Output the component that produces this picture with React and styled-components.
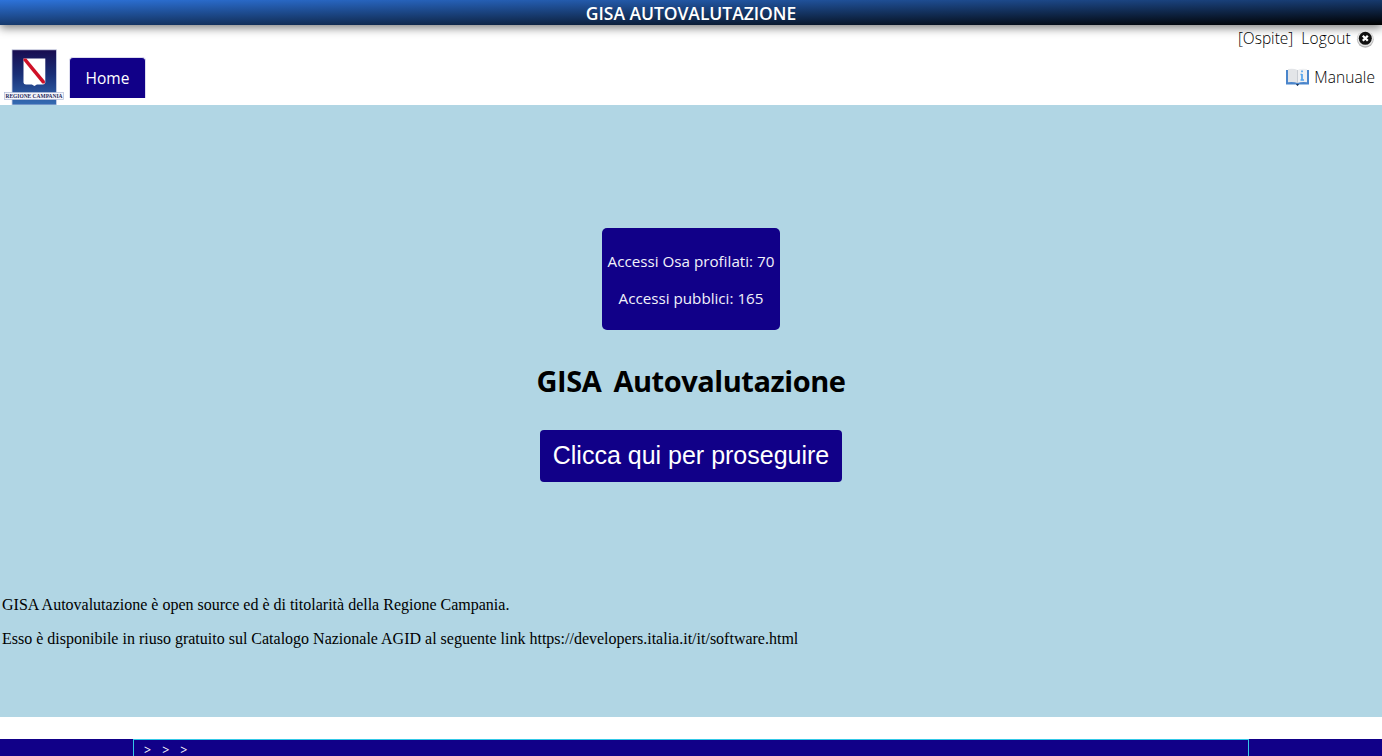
import React from 'react';
import styled, { createGlobalStyle } from 'styled-components';

const navy = '#110088';
const ui = "'Open Sans', 'Noto Sans', sans-serif";

const Global = createGlobalStyle`
  * { box-sizing: border-box; }
  html, body { margin: 0; background: #fff; overflow: hidden; }
`;
const Page = styled.div`
  height: 756px;
  display: flex;
  flex-direction: column;
  font-family: ${ui};
  color: #000;
`;
const TitleBar = styled.div`
  flex: none;
  height: 25px;
  background: linear-gradient(to bottom right, #2d73da, #000);
  box-shadow: 0 3px 10px rgba(0, 0, 0, 0.5);
  color: #fff;
  text-align: center;
  font-size: 17.5px;
  font-weight: 600;
  line-height: 27px;
  letter-spacing: -0.04px;
`;
const Header = styled.header`
  flex: none;
  height: 80px;
  display: flex;
  align-items: flex-start;
  padding: 0 7px 0 4px;
`;
const Logo = styled.svg`
  display: block;
  overflow: visible;
  margin-top: 24px;
  margin-right: 5px;
`;
const HomeTab = styled.a`
  width: 77px;
  height: 41px;
  margin-top: 32px;
  border: 1px solid #dcdcee;
  border-width: 1px 1px 0;
  border-radius: 4px 4px 0 0;
  background: ${navy};
  color: #fff;
  text-align: center;
  font-size: 15.5px;
  line-height: 41px;
`;
const UserArea = styled.div`
  margin-left: auto;
  display: flex;
  flex-direction: column;
  align-items: flex-end;
  font-size: 15.5px;
`;
const UserLine = styled.div`
  display: flex;
  align-items: center;
  height: ${(p) => p.$h}px;
  gap: ${(p) => p.$gap}px;
  font-weight: 300;
  color: #000;
`;
const Label = styled.span`
  padding-bottom: 1px;
  white-space: pre;
  letter-spacing: ${(p) => p.$track || 0}px;
`;
const Main = styled.main`
  flex: none;
  height: 612px;
  padding-top: 123px;
  background: #b1d6e4;
  display: flex;
  flex-direction: column;
  align-items: center;
`;
const Counter = styled.div`
  width: 178px;
  height: 102px;
  border-radius: 5px;
  background: ${navy};
  color: #f2f2fa;
  padding-top: 15px;
  text-align: center;
  font-size: 15.2px;
`;
const CounterLine = styled.div`
  height: 37px;
  line-height: 37px;
  white-space: nowrap;
`;
const Heading = styled.h1`
  margin: 31px 0 30px;
  height: 39px;
  line-height: 39px;
  font-size: 29px;
  font-weight: 700;
  letter-spacing: -0.45px;
  word-spacing: 5px;
  white-space: nowrap;
`;
const Proceed = styled.button`
  width: 302px;
  height: 52px;
  padding: 0 0 2px;
  border: 0;
  border-radius: 4px;
  background: ${navy};
  color: #fff;
  font: 25px 'Liberation Sans', sans-serif;
  white-space: nowrap;
`;
const Notes = styled.div`
  align-self: stretch;
  margin-top: 106px;
  padding-left: 2px;
  font-family: 'Liberation Serif', serif;
  font-size: 16px;
`;
const Note = styled.p`
  margin: 0;
  height: 34px;
  line-height: 34px;
`;
const Footer = styled.footer`
  margin-top: 22px;
  height: 17px;
  background: ${navy};
  display: flex;
  justify-content: center;
  overflow: hidden;
`;
const FooterBox = styled.div`
  width: 1116px;
  height: 30px;
  border: 1px solid #34c8e8;
  padding-left: 10px;
  display: flex;
  gap: 11px;
  color: #fff;
  font: 700 12.5px/20px 'Liberation Serif', serif;
`;

const RegionLogo = () => (
  <Logo width="60" height="56" viewBox="0 0 60 56">
    <defs>
      <linearGradient id="sky" x1="0" y1="0" x2="0" y2="1">
        <stop offset="0" stopColor="#180c50" />
        <stop offset="0.45" stopColor="#192f77" />
        <stop offset="1" stopColor="#356db4" />
      </linearGradient>
    </defs>
    <rect x="8" y="0.8" width="44.5" height="55.2" fill="url(#sky)" stroke="#cdd3e6" strokeWidth="0.8" />
    <path d="M19.5 9.500h21.800v24q0 2-2.500 2h-5.900l-2.500 1.500-2.500-1.500h-5.900q-2.500 0-2.500-2z" fill="#fff" />
    <path d="M19.500 9.500h2.800l18.600 22.500v2.500h-2.600l-18.800-23z" fill="#cf1027" />
    <rect x="0.500" y="43.500" width="59" height="7" fill="#f5f6fb" stroke="#aeb9d6" strokeWidth="0.7" />
    <text x="1.500" y="49.300" textLength="57" lengthAdjust="spacingAndGlyphs" fontFamily="Liberation Serif, serif" fontSize="6.500" fontWeight="700" fill="#24285c">REGIONE CAMPANIA</text>
  </Logo>
);
const CloseIcon = () => (
  <svg width="19" height="19" viewBox="0 0 19 19">
    <circle cx="9.300" cy="10.300" r="8.400" fill="#b8b8b8" />
    <circle cx="9.300" cy="9.300" r="7.900" fill="#e4e4e4" />
    <circle cx="9.300" cy="9.300" r="6.500" fill="#111" />
    <path d="M6.800 6.800l5 5M11.800 6.800l-5 5" stroke="#fff" strokeWidth="2.300" />
  </svg>
);
const BookIcon = () => (
  <svg width="23" height="18" viewBox="0 0 23 18">
    <path d="M0 2h23v14.500h-10l-1.500 1.500-1.500-1.500h-10z" fill="#4a85cb" />
    <path d="M2 1q6-1 9.500 1v13q-4-1.500-9.500-.8z" fill="#e3e5e8" />
    <path d="M21 1q-6-1-9.500 1v13q4-1.500 9.500-.8z" fill="#eff0f2" />
    <path d="M11.500 2v13" stroke="#c9cdd3" />
    <path d="M10 16h3l-1.500 2z" fill="#26384f" />
    <path d="M16 2.500v1.800M16 6v6.500M14.500 6.500h1.500M14.500 12h3.500" stroke="#54a4ee" strokeWidth="1.700" />
  </svg>
);

export default function App() {
  return (
    <Page>
      <Global />
      <TitleBar>GISA AUTOVALUTAZIONE</TitleBar>
      <Header>
        <RegionLogo />
        <HomeTab>Home</HomeTab>
        <UserArea>
          <UserLine $h={26} $gap={8}>
            <Label>[Ospite]</Label>
            <UserLine $h={26} $gap={5}><Label $track={0.2}>Logout</Label><CloseIcon /></UserLine>
          </UserLine>
          <UserLine $h={52} $gap={5}><BookIcon /><Label $track={0.1}>Manuale</Label></UserLine>
        </UserArea>
      </Header>
      <Main>
        <Counter>
          <CounterLine>Accessi Osa profilati: 70</CounterLine>
          <CounterLine>Accessi pubblici: 165</CounterLine>
        </Counter>
        <Heading>GISA Autovalutazione</Heading>
        <Proceed>Clicca qui per proseguire</Proceed>
        <Notes>
          <Note>GISA Autovalutazione è open source ed è di titolarità della Regione Campania.</Note>
          <Note>Esso è disponibile in riuso gratuito sul Catalogo Nazionale AGID al seguente link https://developers.italia.it/it/software.html</Note>
        </Notes>
      </Main>
      <Footer>
        <FooterBox><span>&gt;</span><span>&gt;</span><span>&gt;</span></FooterBox>
      </Footer>
    </Page>
  );
}
